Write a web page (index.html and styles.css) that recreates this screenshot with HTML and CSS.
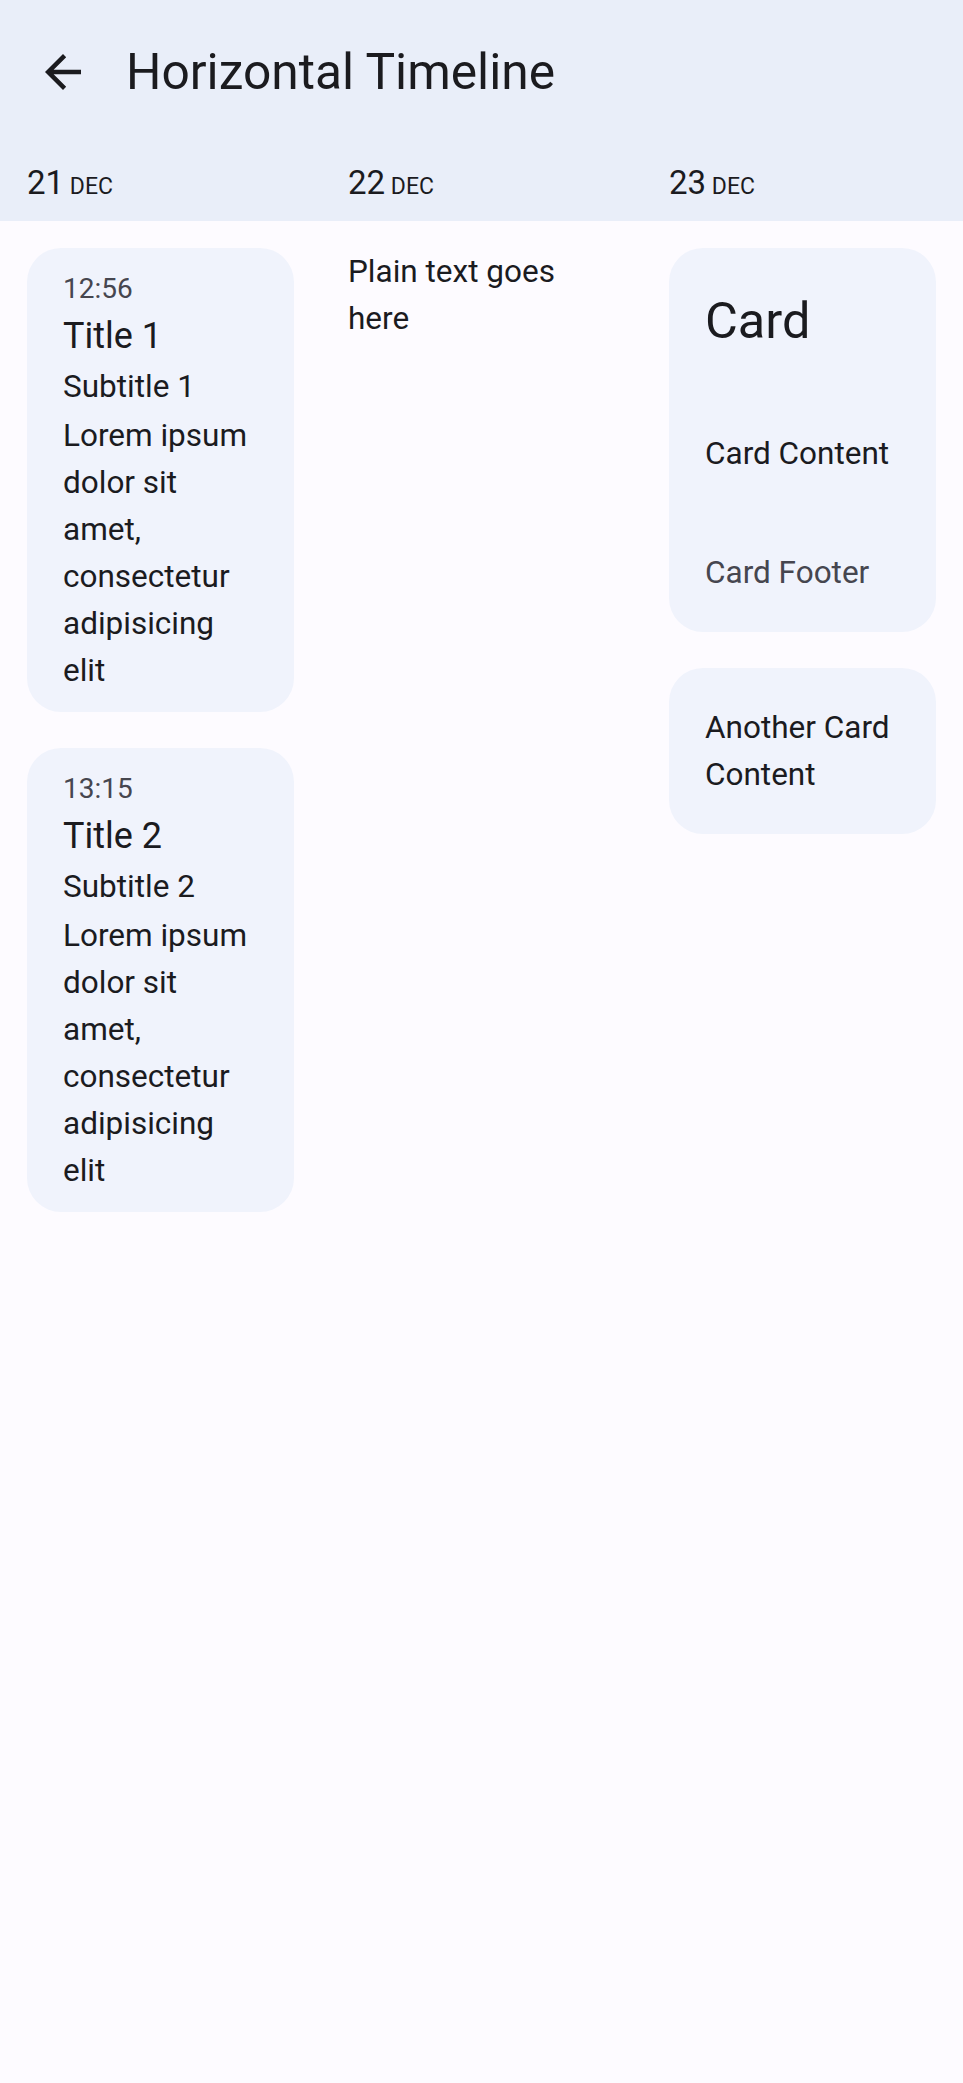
FILE: index.html
```html
<!DOCTYPE html>
<html lang="en">
<head>
<meta charset="utf-8">
<title>Horizontal Timeline</title>
<link rel="stylesheet" href="styles.css">
</head>
<body>
<div class="app">
  <header class="header">
    <div class="topbar">
      <span class="nav-icon" aria-label="Back">
        <svg viewBox="0 0 24 24" width="54" height="54"><path d="M20 11H7.83l5.59-5.59L12 4l-8 8 8 8 1.41-1.41L7.83 13H20v-2z" fill="#1b1b1f"/></svg>
      </span>
      <h1 class="title">Horizontal Timeline</h1>
    </div>
    <div class="dates">
      <div class="date"><span class="day">21</span> <span class="month">DEC</span></div>
      <div class="date"><span class="day">22</span> <span class="month">DEC</span></div>
      <div class="date"><span class="day">23</span> <span class="month">DEC</span></div>
    </div>
  </header>
  <main class="timeline">
    <section class="column">
      <article class="card event">
        <div class="time">12:56</div>
        <div class="event-title">Title 1</div>
        <div class="subtitle">Subtitle 1</div>
        <div class="body">Lorem ipsum dolor sit amet, consectetur adipisicing elit</div>
      </article>
      <article class="card event">
        <div class="time">13:15</div>
        <div class="event-title">Title 2</div>
        <div class="subtitle">Subtitle 2</div>
        <div class="body">Lorem ipsum dolor sit amet, consectetur adipisicing elit</div>
      </article>
    </section>
    <section class="column">
      <p class="plain">Plain text goes here</p>
    </section>
    <section class="column">
      <article class="card box">
        <div class="card-title">Card</div>
        <div class="body">Card Content</div>
        <div class="body muted">Card Footer</div>
      </article>
      <article class="card simple">
        <div class="body">Another Card Content</div>
      </article>
    </section>
  </main>
</div>
</body>
</html>
```
FILE: styles.css
```css
html, body {
  margin: 0;
  padding: 0;
  background: #fdfbff;
}
body {
  font-family: Roboto, "Noto Sans", "Liberation Sans", sans-serif;
  color: #1b1b1f;
  width: 963px;
  min-height: 2083px;
}
.header {
  background: #e9eef9;
}
.topbar {
  height: 144px;
  display: flex;
  align-items: center;
}
.nav-icon {
  width: 54px;
  height: 54px;
  margin-left: 36px;
  display: flex;
}
.title {
  margin: 0 0 0 36px;
  font-size: 49.7px;
  font-weight: 400;
  line-height: 60px;
}
.dates {
  display: flex;
  height: 77px;
}
.date {
  flex: 1;
  padding-left: 27px;
  font-size: 23px;
  line-height: 77px;
  white-space: nowrap;
}
.day {
  font-size: 33px;
}
.month {
  font-size: 23px;
}
.timeline {
  display: flex;
  align-items: flex-start;
  padding-top: 27px;
}
.column {
  flex: 1;
  min-width: 0;
  padding: 0 27px;
  display: flex;
  flex-direction: column;
  gap: 36px;
}
.card {
  background: #f0f3fc;
  border-radius: 34px;
}
.event {
  padding: 21px 40px 18px 36px;
}
.box, .simple {
  padding: 36px;
}
.time {
  font-size: 28px;
  line-height: 40px;
  color: #46464f;
}
.event-title {
  font-size: 36px;
  line-height: 54px;
}
.subtitle {
  font-size: 31.5px;
  line-height: 47px;
  margin-bottom: 2px;
}
.body, .plain {
  font-size: 31.5px;
  line-height: 47px;
}
.plain {
  margin: 0;
}
.card-title {
  font-size: 50.5px;
  line-height: 74px;
  margin-bottom: 72px;
}
.box .muted {
  margin-top: 72px;
  color: #46464f;
}
```
